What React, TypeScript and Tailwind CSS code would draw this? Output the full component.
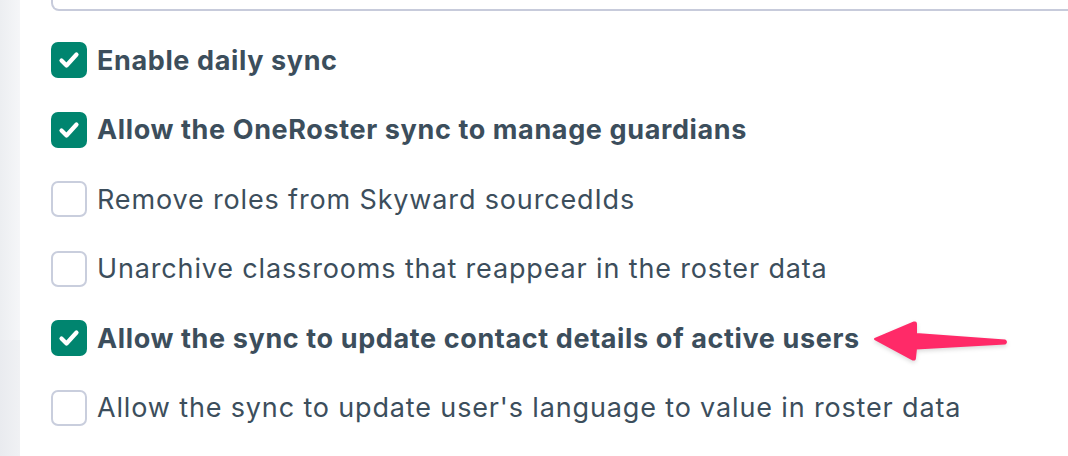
import React from "react";

const items: { label: string; checked: boolean }[] = [
  { label: "Enable daily sync", checked: true },
  { label: "Allow the OneRoster sync to manage guardians", checked: true },
  { label: "Remove roles from Skyward sourcedIds", checked: false },
  { label: "Unarchive classrooms that reappear in the roster data", checked: false },
  { label: "Allow the sync to update contact details of active users", checked: true },
  { label: "Allow the sync to update user's language to value in roster data", checked: false },
];

function Box({ checked }: { checked: boolean }) {
  if (checked) {
    return (
      <div className="w-9 h-9 shrink-0 rounded-[7px] bg-[#00856f] flex items-center justify-center">
        <svg width="36" height="36" viewBox="0 0 36 36" fill="none">
          <path
            d="M10.5 18.5 L15.5 23.5 L25.5 12.5"
            stroke="white"
            strokeWidth="4.2"
            strokeLinecap="round"
            strokeLinejoin="round"
          />
        </svg>
      </div>
    );
  }
  return <div className="w-9 h-9 shrink-0 rounded-[7px] border-2 border-[#c9cedd] bg-white" />;
}

export default function App() {
  return (
    <div
      className="relative w-[1068px] h-[456px] overflow-hidden bg-white flex"
      style={{ fontFamily: "Inter, 'Noto Sans', sans-serif" }}
    >
      <div className="w-[20px] shrink-0 flex flex-col">
        <div className="h-[340px] bg-gradient-to-r from-[#eceef1] to-[#f5f6f8]" />
        <div className="flex-1 bg-gradient-to-r from-[#e9ebef] to-[#f0f1f4]" />
      </div>
      <div className="flex-1 pl-[31px]">
        <div className="w-[1100px] h-[11px] border-2 border-t-0 border-[#c7cbdb] rounded-b-[8px]" />
        <div className="mt-[31px] flex flex-col gap-[33.6px]">
          {items.map((it) => (
            <div key={it.label} className="flex items-center gap-[10px] h-9">
              <Box checked={it.checked} />
              <span
                className={`text-[27px] leading-none whitespace-nowrap text-[#3c4e5c] ${
                  it.checked ? "font-bold tracking-[0.62px]" : "font-normal tracking-[0.85px]"
                }`}
              >
                {it.label}
              </span>
            </div>
          ))}
        </div>
      </div>
      <svg
        className="absolute left-[860px] top-[310px] drop-shadow-[0_2px_2px_rgba(0,0,0,0.15)]"
        width="160"
        height="60"
        viewBox="0 0 160 60"
      >
        <path
          d="M15 29 L54 12.5 Q56 12 56 14 L56 24 L145 30.5 Q147 32 145 33.5 L56 38.5 L55 48 Q55 50 53 49.5 Z"
          fill="#ff2a68"
          stroke="#ff2a68"
          strokeWidth="2"
          strokeLinejoin="round"
        />
      </svg>
    </div>
  );
}
